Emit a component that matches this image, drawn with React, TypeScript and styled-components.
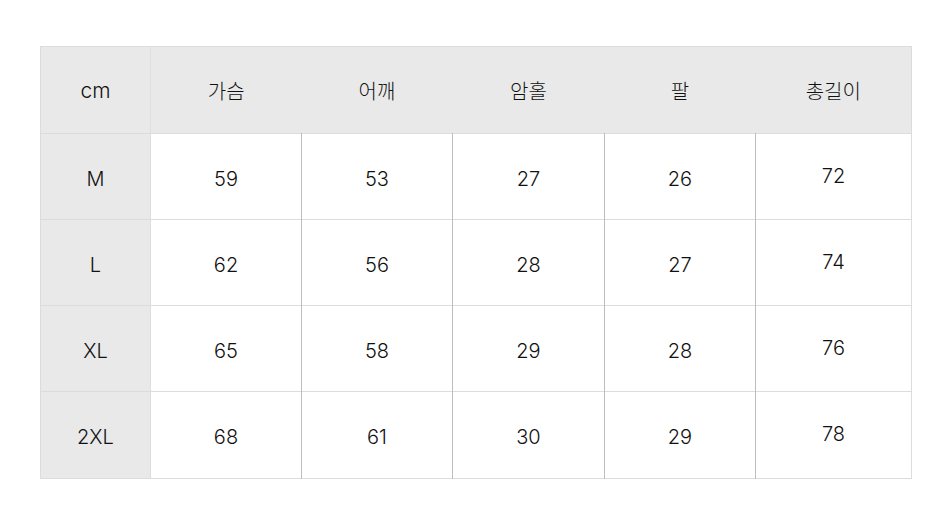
import React from "react";
import styled, { createGlobalStyle } from "styled-components";

const GlobalStyle = createGlobalStyle`
  html, body { margin: 0; padding: 0; background: #ffffff; }
  body { font-family: "Inter", "Noto Sans CJK KR", sans-serif; }
`;

const Page = styled.div`
  width: 950px;
  height: 524px;
  box-sizing: border-box;
  padding: 46px 40px 0 40px;
  background: #ffffff;
`;

const Table = styled.table`
  width: 871px;
  border-collapse: collapse;
  table-layout: fixed;
  border: 1px solid #dcdcdc;
  font-family: "Inter", "Noto Sans CJK KR", sans-serif;
  font-weight: 300;
  color: #111111;
  font-size: 20px;
`;

const Col = styled.col<{ $w: number }>`
  width: ${(p) => p.$w}px;
`;

const HeadRow = styled.tr`
  height: 87px;
  background: #e9e9e9;
`;

const BodyRow = styled.tr<{ $tall?: boolean }>`
  height: ${(p) => (p.$tall ? 87 : 86)}px;
  border-top: 1px solid #dcdcdc;
`;

const HeadCell = styled.th<{ $first?: boolean }>`
  font-weight: 300;
  text-align: center;
  vertical-align: middle;
  padding: 0;
  font-size: ${(p) => (p.$first ? 21 : 20)}px;
  border-right: ${(p) => (p.$first ? "1px solid #dedede" : "none")};
`;

const SizeCell = styled.th`
  font-weight: 300;
  text-align: center;
  vertical-align: middle;
  padding: 4px 0 0 0;
  background: #e9e9e9;
  border-right: 1px solid #dedede;
`;

const ValueCell = styled.td<{ $last?: boolean }>`
  text-align: center;
  vertical-align: middle;
  padding: ${(p) => (p.$last ? "0 0 2px 0" : "4px 0 0 0")};
  background: #ffffff;
  border-right: ${(p) => (p.$last ? "none" : "1px solid #bdbdbd")};
`;

const widths = [110, 151, 151, 152, 151, 156];
const headers = ["가슴", "어깨", "암홀", "팔", "총길이"];
const rows: { size: string; values: number[] }[] = [
  { size: "M", values: [59, 53, 27, 26, 72] },
  { size: "L", values: [62, 56, 28, 27, 74] },
  { size: "XL", values: [65, 58, 29, 28, 76] },
  { size: "2XL", values: [68, 61, 30, 29, 78] },
];

export default function App() {
  return (
    <Page>
      <GlobalStyle />
      <Table>
        <colgroup>
          {widths.map((w, i) => (
            <Col key={i} $w={w} />
          ))}
        </colgroup>
        <thead>
          <HeadRow>
            <HeadCell $first>cm</HeadCell>
            {headers.map((h) => (
              <HeadCell key={h}>{h}</HeadCell>
            ))}
          </HeadRow>
        </thead>
        <tbody>
          {rows.map((r, ri) => (
            <BodyRow key={r.size} $tall={ri === rows.length - 1}>
              <SizeCell>{r.size}</SizeCell>
              {r.values.map((v, i) => (
                <ValueCell key={i} $last={i === r.values.length - 1}>
                  {v}
                </ValueCell>
              ))}
            </BodyRow>
          ))}
        </tbody>
      </Table>
    </Page>
  );
}
